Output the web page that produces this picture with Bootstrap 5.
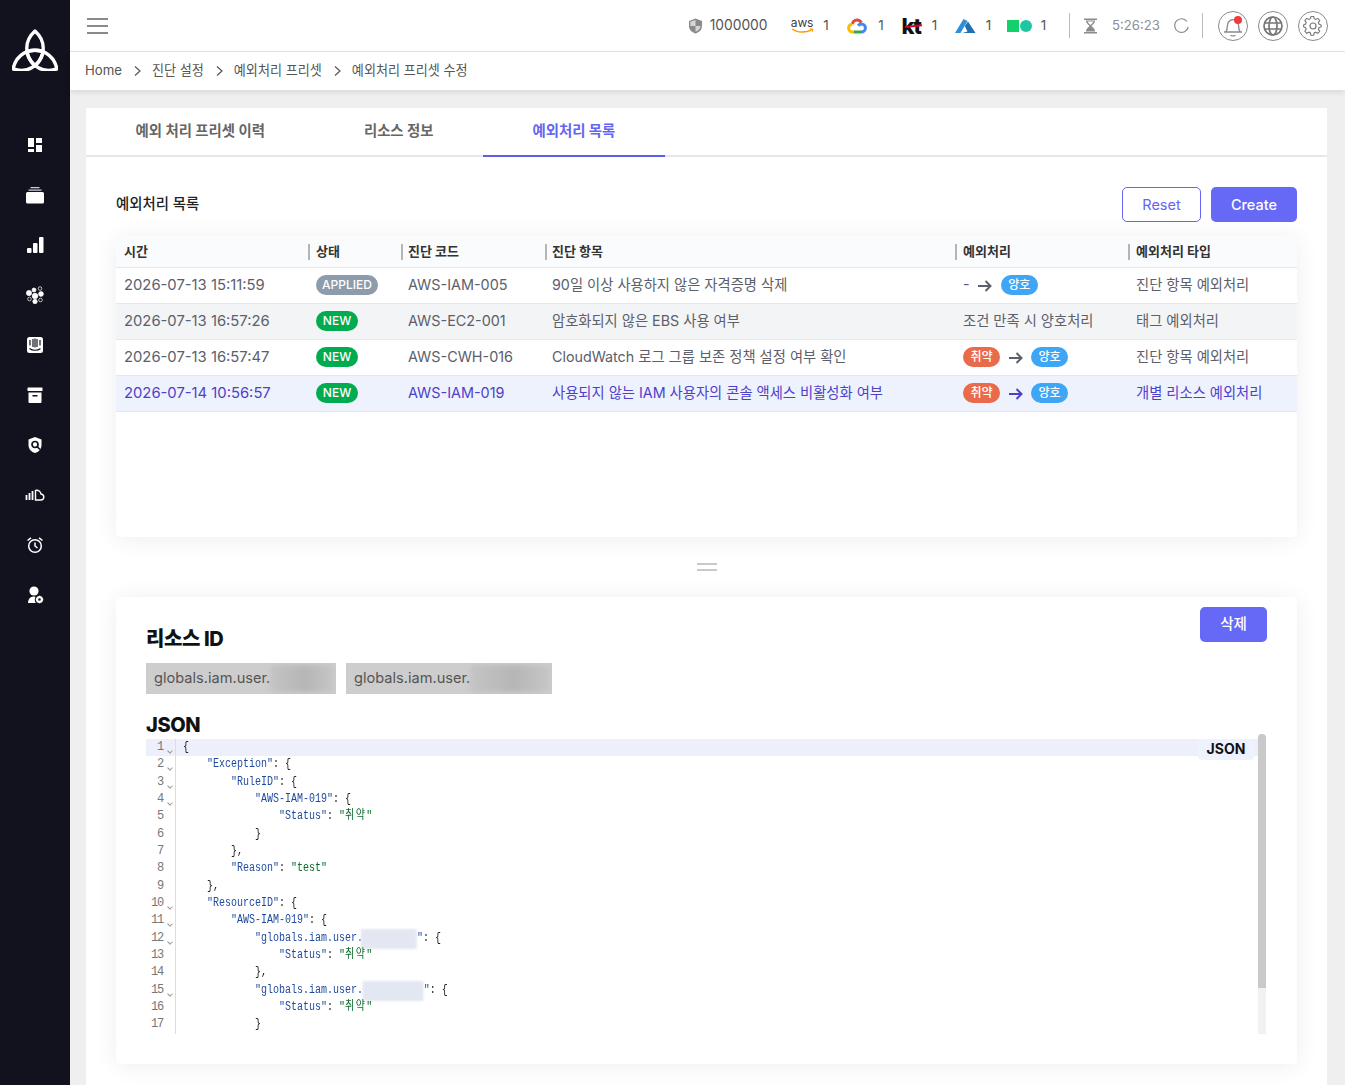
<!DOCTYPE html>
<html lang="ko">
<head>
  <meta charset="UTF-8">
  <title>예외처리 프리셋 수정</title>
  <link href="https://cdn.jsdelivr.net/npm/bootstrap@5.3.3/dist/css/bootstrap.min.css" rel="stylesheet">
  <style>
    html, body { height: 100%; overflow: hidden; }
    body { font-family: Inter, "Noto Sans CJK KR", sans-serif; background: #efefef; color: #555b66; font-size: 14px; }
    .app-shell { height: 1085px; }
    .side-rail { width: 70px; flex: none; background: #12121f; }
    .rail-logo { height: 120px; padding-top: 29px; }
    .rail-item { height: 50px; }
    .main-area { min-width: 0; }
    .top-bar { flex: none; height: 52px; background: #fff; border-bottom: 1px solid #e6e6e6; padding: 0 17px; }
    .burger { width: 21px; }
    .burger i { display: block; height: 2px; background: #8a8a8a; margin: 5px 0; }
    .stat-num { color: #555; font-size: 13.8px; }
    .stat-one { color: #555; font-size: 13.5px; width: 7px; margin-left: 9px; text-align: center; }
    .stat-one.one-8 { margin-left: 8px; }
    .stat-one.one-10 { margin-left: 10px; }
    .stat-one.one-11 { margin-left: 11px; }
    .stat-time { color: #8b8f96; font-size: 13.2px; margin-left: 15px; }
    .v-rule { width: 1px; height: 25px; background: #bbb; }
    .v-rule-a { margin: 0 14px 0 22px; }
    .v-rule-b { margin: 0 15px 0 13px; }
    .ml-7 { margin-left: 7px; }
    .ml-10 { margin-left: 10px; }
    .ml-14 { margin-left: 14px; }
    .ml-15 { margin-left: 15px; }
    .ml-16 { margin-left: 16px; }
    .ml-17 { margin-left: 17px; }
    .ml-23 { margin-left: 23px; }
    .round-btn { width: 30px; height: 30px; border: 1px solid #8a8a8a; border-radius: 50%; position: relative; }
    .red-dot { position: absolute; top: 4px; right: 5px; width: 8px; height: 8px; border-radius: 50%; background: #ef3b3b; }
    .aws-word { font-size: 12px; line-height: 10px; color: #3b3f46; letter-spacing: -.2px; }
    .kt-word { font-size: 22px; line-height: 22px; font-weight: 800; color: #111; letter-spacing: -1px; position: relative; }
    .kt-word i { position: absolute; left: 3px; right: -1px; top: 10px; height: 2px; background: #e2001a; transform: rotate(-6deg); }
    .crumb-bar { flex: none; height: 38px; background: #fff; padding-left: 15px; box-shadow: 0 2px 6px rgba(0, 0, 0, .1); font-size: 13.1px; color: #555; position: relative; }
    .crumb-bar .home-link { font-size: 13.2px; }
    .crumb-sep { margin: 0 11px 0 12px; }
    .content-wrap { padding: 18px 18px 0 16px; min-height: 0; }
    .tab-panel { background: #fff; min-height: 1000px; }
    .tab-strip { border-bottom: 2px solid #e7e7ee; height: 49px; }
    .tab-item { padding: 0 49.5px; height: 49px; line-height: 46px; font-weight: 700; color: #666; font-size: 14.4px; margin-bottom: -2px; }
    .tab-item.is-on { color: #6366f1; border-bottom: 2px solid #5b5fe8; }
    .list-head { padding: 30px 30px 14px; }
    .list-title { font-size: 14.4px; font-weight: 500; color: #222; margin-bottom: 2px; }
    .btn-reset, .btn-violet { height: 35px; font-size: 14.5px; font-weight: 500; border-radius: 5px; padding: 0; }
    .btn-reset { width: 79px; color: #6366f1; border: 1px solid #6366f1; background: #fff; font-weight: 400; }
    .btn-violet { background: #6569f6; color: #fff; border: 0; }
    .btn-create { width: 86px; margin-left: 10px; }
    .btn-del { width: 67px; padding-bottom: 2px; }
    .soft-card { background: #fff; border-radius: 5px; box-shadow: 0 2px 24px rgba(0, 0, 0, .07); margin: 0 30px; }
    .list-card { height: 301px; }
    .rule-table { table-layout: fixed; width: 100%; margin: 0; font-size: 15px; }
    .rule-table th { height: 31px; background: #fafbfd; font-size: 13px; font-weight: 700; color: #333; padding: 0 0 0 7px; border-bottom: 1px solid #e5e7eb; vertical-align: middle; position: relative; }
    .rule-table th + th::before { content: ""; position: absolute; left: -1px; top: 8px; height: 16px; width: 2px; background: #b5b5b5; }
    .rule-table td { height: 36px; padding: 0 0 0 7px; border-bottom: 1px solid #e5e7eb; vertical-align: middle; color: #5b606b; background: #fff; white-space: nowrap; font-size: 14.4px; }
    .rule-table td:first-child { font-size: 14.8px; padding-left: 8px; }
    .rule-table th:first-child { padding-left: 8px; }
    .rule-table th:nth-child(3), .rule-table td:nth-child(3), .rule-table th:nth-child(4), .rule-table td:nth-child(4) { padding-left: 6px; }
    .rule-table td.item-ko { font-size: 14.3px; }
    .rule-table tr.row-grey td { background: #f3f4f6; }
    .rule-table tr.row-pick td { background: #eef2fd; color: #4f3fc9; }
    .flow-arrow { margin: 0 4px 0 5px; }
    .flow-arrow-first { margin: 0 5px 0 4px; }
    .pill { display: inline-block; height: 20px; line-height: 20px; padding: 0; margin-bottom: 2px; text-align: center; border-radius: 10px; color: #fff; font-size: 12px; font-weight: 500; vertical-align: middle; }
    .pill-applied { width: 62px; background: #8d9cab; }
    .pill-new { width: 42px; background: #00ac4f; }
    .pill-bad { width: 37px; background: #ea6b4b; }
    .pill-good { width: 37px; background: #3fa6f5; }
    .grip { height: 60px; }
    .grip i { display: block; width: 20px; height: 2px; background: #c9c9c9; margin: 2px 0; }
    .detail-card { height: 467px; padding: 10px 30px 0; position: relative; }
    .detail-top { height: 46px; }
    .detail-h { font-size: 20px; font-weight: 800; color: #111; margin: 0; line-height: 24px; letter-spacing: -.4px; }
    .head-res { margin-top: -26px; }
    .chip-row { column-gap: 10px; margin: 12px 0 19px; }
    .id-chip { background: #cdcdcd; height: 31px; line-height: 30px; padding-left: 8px; font-size: 14.6px; color: #555; overflow: hidden; white-space: nowrap; }
    .chip-blur { display: inline-block; height: 27px; vertical-align: top; margin-top: 2px; background: linear-gradient(90deg, #c4c4c4, #b6b6b6 55%, #c6c6c6); filter: blur(2px); }
    .code-box { position: relative; height: 300px; margin-top: -3px; }
    .code-body { position: absolute; left: 0; top: 5px; right: 9px; height: 295px; overflow: hidden; font-family: "Liberation Mono", "Noto Sans CJK KR", monospace; font-size: 12px; color: #222; }
    .code-ln { height: 17.33px; line-height: 17.33px; white-space: pre; display: flex; }
    .code-ln.is-cur { background: #edf0fb; }
    .ln-no { flex: none; width: 30px; padding-right: 12px; text-align: right; color: #777; border-right: 1px solid #ddd; position: relative; letter-spacing: -1.2px; }
    .ln-no.can-fold::after { content: ""; position: absolute; right: 3px; top: 10px; width: 4px; height: 4px; border-right: 1px solid #b09a70; border-bottom: 1px solid #7f93b0; transform: rotate(45deg); }
    .ln-txt { display: inline-block; padding-left: 8.4px; transform: scaleX(.833); transform-origin: 0 0; }
    .k { color: #1f4a9c; }
    .s { color: #0b6b2b; }
    .ko-w { letter-spacing: 1.8px; }
    .code-hide { display: inline-block; height: 20px; vertical-align: top; background: #e3e7f2; filter: blur(1px); margin-top: -1px; }
    .mode-tag { position: absolute; top: 5px; right: 13px; width: 56px; height: 21px; line-height: 20px; text-align: center; background: #eef2fd; border-radius: 0 0 4px 4px; font-size: 14px; font-weight: 700; color: #111; }
    .scroll-track { position: absolute; right: 1px; top: 0; width: 8px; height: 300px; background: #f1f1f1; border-radius: 4px 4px 0 0; }
    .scroll-thumb { height: 254px; background: #c9c9c9; border-radius: 4px 4px 0 0; }
  </style>
</head>
<body>
<div class="app-shell d-flex">

  <!-- 사이드바 -->
  <aside class="side-rail d-flex flex-column align-items-center">
    <div class="rail-logo">
      <svg width="46" height="42" viewBox="0 0 46 42" fill="none" stroke="#fff" stroke-width="3.400" stroke-linejoin="round">
        <path d="M23 2C34 12 34 26 23 37 12 26 12 12 23 2z"/>
        <path d="M23 2C34 12 34 26 23 37 12 26 12 12 23 2z" transform="rotate(120 23 27.300)"/>
        <path d="M23 2C34 12 34 26 23 37 12 26 12 12 23 2z" transform="rotate(240 23 27.300)"/>
      </svg>
    </div>
    <div class="rail-item d-flex align-items-center justify-content-center"><svg width="20" height="20" viewBox="0 0 20 20" fill="#fff"><path d="M3 3h6v9H3zM11 3h6v5h-6zM11 10h6v7h-6zM3 14h6v3H3z"/></svg></div>
    <div class="rail-item d-flex align-items-center justify-content-center"><svg width="20" height="20" viewBox="0 0 20 20" fill="#fff"><path d="M1 8.500a1.500 1.500 0 0 1 1.500-1.500h15a1.500 1.500 0 0 1 1.500 1.500V17a1.500 1.500 0 0 1-1.500 1.500h-15A1.500 1.500 0 0 1 1 17z"/><path d="M3.500 4.500h13v1.300h-13zM5.500 2h9v1.200h-9z" opacity=".8"/></svg></div>
    <div class="rail-item d-flex align-items-center justify-content-center"><svg width="20" height="20" viewBox="0 0 20 20" fill="#fff"><rect x="2" y="13" width="4.500" height="5" rx="1"/><rect x="8" y="8" width="4.500" height="10" rx="1"/><rect x="14" y="2" width="4.500" height="16" rx="1"/></svg></div>
    <div class="rail-item d-flex align-items-center justify-content-center"><svg width="20" height="20" viewBox="0 0 20 20" fill="#fff" stroke="#fff" stroke-width=".7"><circle cx="4" cy="8" r="2.600"/><circle cx="9" cy="5" r="2"/><circle cx="15" cy="3.500" r="1.800" fill="none"/><circle cx="16" cy="9" r="2.400"/><circle cx="10" cy="11" r="2.800"/><circle cx="4.500" cy="14" r="1.800" fill="none"/><circle cx="10" cy="16.500" r="2.200"/><circle cx="15.500" cy="15" r="1.800" fill="none"/></svg></div>
    <div class="rail-item d-flex align-items-center justify-content-center"><svg width="20" height="20" viewBox="0 0 20 20"><rect x="2" y="2" width="16" height="16" rx="2.500" fill="#fff"/><path d="M5 5v5.500M8 4v8M10 3.500v9M12 4v8M15 5v5.500" stroke="#12121f" stroke-width="1.200"/><path d="M4.500 13.500c3 2.300 8 2.300 11 0" stroke="#12121f" stroke-width="1.200" fill="none"/></svg></div>
    <div class="rail-item d-flex align-items-center justify-content-center"><svg width="20" height="20" viewBox="0 0 20 20" fill="#fff"><rect x="2.500" y="2.500" width="15" height="3.600" rx=".6"/><path d="M3.500 7.500h13v9.500a1 1 0 0 1-1 1h-11a1 1 0 0 1-1-1z"/><rect x="7.500" y="10" width="5" height="1.500" fill="#12121f"/></svg></div>
    <div class="rail-item d-flex align-items-center justify-content-center"><svg width="20" height="20" viewBox="0 0 20 20"><path d="M10 2l6.500 2.500v5.500c0 4-2.800 7-6.500 8-3.700-1-6.500-4-6.500-8V4.500z" fill="#fff"/><circle cx="10" cy="9.500" r="3" fill="none" stroke="#12121f" stroke-width="1.700"/><path d="M12 11.500l3 3" stroke="#12121f" stroke-width="1.700"/></svg></div>
    <div class="rail-item d-flex align-items-center justify-content-center"><svg width="20" height="20" viewBox="0 0 20 20" fill="none" stroke="#fff" stroke-width="1.400"><path d="M1.500 10v5M4.500 8v7M7.500 6v9" stroke-width="1.800"/><path d="M10.500 5.500c3-.8 5 1 5.500 3.500 1.500.2 2.800 1.500 2.800 3 0 1.700-1.300 3-3 3h-5.300z"/></svg></div>
    <div class="rail-item d-flex align-items-center justify-content-center"><svg width="20" height="20" viewBox="0 0 20 20" fill="none" stroke="#fff" stroke-width="1.500"><circle cx="10" cy="11" r="6.300"/><path d="M10 7.500V11l2.500 2M2.500 5.500L6 2.800M17.500 5.500L14 2.800"/></svg></div>
    <div class="rail-item d-flex align-items-center justify-content-center"><svg width="20" height="20" viewBox="0 0 20 20" fill="#fff"><circle cx="9" cy="6" r="4.600"/><path d="M3 18c.3-4 2.300-6.300 5.500-6.500l2 .3c-1 1.700-1 4.200.3 6.200z"/><circle cx="14.500" cy="14.500" r="2.400" fill="none" stroke="#fff" stroke-width="2.200"/><path d="M14.500 10.800v1.500M14.500 16.700v1.500M10.800 14.500h1.500M16.700 14.500h1.500" stroke="#fff" stroke-width="1.400"/></svg></div>
  </aside>

  <div class="main-area flex-grow-1 d-flex flex-column">
    <!-- 상단바 -->
    <header class="top-bar d-flex align-items-center justify-content-between">
      <div class="burger"><i></i><i></i><i></i></div>
      <div class="d-flex align-items-center">
        <svg width="15" height="16" viewBox="0 0 15 16"><path d="M7.500 .5L14 3v5c0 3.600-2.700 6.300-6.500 7.500C3.700 14.300 1 11.600 1 8V3z" fill="#8a8a8a"/><path d="M7.500 2v6H2.300V3.800zM7.500 8h5.200c-.3 2.600-2.300 4.600-5.200 5.800z" fill="#d5d5d5"/></svg>
        <span class="stat-num ml-7">1000000</span>
        <span class="ml-23 d-inline-flex flex-column align-items-center">
          <span class="aws-word">aws</span>
          <svg width="23" height="6" viewBox="0 0 23 6" fill="none" stroke="#f90" stroke-width="1.500"><path d="M1 1c5 4 15 4 20 .5"/><path d="M19 .8l3 .2-.8 2.800" stroke-width="1"/></svg>
        </span>
        <span class="stat-one">1</span>
        <svg class="ml-17" width="20" height="16" viewBox="0 0 20 16" fill="none" stroke-width="3"><path d="M14.500 4.500C13 2.500 11.500 2 10 2 7.500 2 5.500 4 5.200 6.200" stroke="#ea4335"/><path d="M5.200 6.200C3 6.500 1.600 8.300 1.600 10c0 2.200 1.700 4 4 4h2" stroke="#fbbc04"/><path d="M7 14h7" stroke="#34a853"/><path d="M14 14c2.500 0 4.400-1.800 4.400-4 0-2.300-1.800-4-4-4-1.400 0-2.500.7-3.300 1.700" stroke="#4285f4"/></svg>
        <span class="stat-one one-11">1</span>
        <span class="kt-word ml-17"><span>kt</span><i></i></span>
        <span class="stat-one one-10">1</span>
        <svg class="ml-16" width="22" height="16" viewBox="0 0 22 16"><path d="M9.500 1L1 15h5.500L13.500 3z" fill="#2f8fd6"/><path d="M14 3.500L21.500 15H8.500l5-1.500L10.800 8z" fill="#1f6fb5"/></svg>
        <span class="stat-one">1</span>
        <svg class="ml-15" width="25" height="12" viewBox="0 0 25 12"><rect x="0" y="0" width="12" height="12" fill="#12d06a"/><circle cx="19" cy="6" r="6" fill="#1fc7a0"/></svg>
        <span class="stat-one one-8">1</span>
        <span class="v-rule v-rule-a"></span>
        <svg width="13" height="16" viewBox="0 0 13 16"><path d="M0 .5h13v1.500H0zM0 14h13v1.500H0zM2 2.500h9c0 3-2.500 4-3.500 5.500 1 1.500 3.500 2.500 3.500 5.500H2c0-3 2.500-4 3.500-5.500C4.500 6.500 2 5.500 2 2.500z" fill="#8a8a8a"/><path d="M3.500 3.500h6c-.4 1.400-2 2.400-3 3.600-1-1.200-2.600-2.200-3-3.600z" fill="#fff"/></svg>
        <span class="stat-time">5:26:23</span>
        <svg class="ml-14" width="15" height="16" viewBox="0 0 15 16" fill="none" stroke="#8a8a8a" stroke-width="1.200"><path d="M13 3.500A6.800 6.800 0 1 0 14.200 9"/></svg>
        <span class="v-rule v-rule-b"></span>
        <span class="round-btn d-flex align-items-center justify-content-center">
          <svg width="24" height="24" viewBox="0 0 20 20" fill="none" stroke="#8a8a8a" stroke-width="1.100"><path d="M4 15c1.200-1.500 1.300-3 1.300-5 0-3 2-5.300 4.700-5.300s4.700 2.300 4.700 5.300c0 2 .1 3.500 1.300 5zM2.500 15h15M8 17.500c.5 1 3.500 1 4 0"/></svg>
          <span class="red-dot"></span>
        </span>
        <span class="round-btn d-flex align-items-center justify-content-center ml-10">
          <svg width="22" height="22" viewBox="0 0 22 22" fill="none" stroke="#777" stroke-width="1.700"><circle cx="11" cy="11" r="9"/><ellipse cx="11" cy="11" rx="4" ry="9"/><path d="M2.500 8h17M2.500 14h17"/></svg>
        </span>
        <span class="round-btn d-flex align-items-center justify-content-center ml-10">
          <svg width="20" height="20" viewBox="0 0 20 20" fill="none" stroke="#777" stroke-width="1.200"><circle cx="10" cy="10" r="3"/><path d="M8.500 1.500h3l.5 2.500 1.700.8 2.300-1.200 2 2.300-1.400 2.100.6 1.800 2.300 1v1.800l-2.300 1-.6 1.800 1.400 2.100-2 2.200-2.300-1.200-1.700.8-.5 2.500" transform="translate(0 -1) scale(.93)"/><path d="M8.500 1.500L8 4l-1.700.8L4 3.600 2 5.900l1.400 2.100-.6 1.800-2.300 1v1.800l2.300 1 .6 1.800L2 17.500l2 2.200 2.300-1.200 1.700.8.500 2.500h3" transform="translate(0 -1) scale(.93)"/></svg>
        </span>
      </div>
    </header>

    <!-- 경로 -->
    <nav class="crumb-bar d-flex align-items-center">
      <span class="home-link">Home</span>
      <svg class="crumb-sep" width="7" height="10" viewBox="0 0 7 10" fill="none" stroke="#555" stroke-width="1.200"><path d="M1 .5L6 5 1 9.500"/></svg>
      <span>진단 설정</span>
      <svg class="crumb-sep" width="7" height="10" viewBox="0 0 7 10" fill="none" stroke="#555" stroke-width="1.200"><path d="M1 .5L6 5 1 9.500"/></svg>
      <span>예외처리 프리셋</span>
      <svg class="crumb-sep" width="7" height="10" viewBox="0 0 7 10" fill="none" stroke="#555" stroke-width="1.200"><path d="M1 .5L6 5 1 9.500"/></svg>
      <span>예외처리 프리셋 수정</span>
    </nav>

    <main class="content-wrap flex-grow-1 overflow-hidden">
      <div class="tab-panel">
        <div class="tab-strip d-flex">
          <div class="tab-item">예외 처리 프리셋 이력</div>
          <div class="tab-item">리소스 정보</div>
          <div class="tab-item is-on">예외처리 목록</div>
        </div>

        <div class="list-head d-flex justify-content-between align-items-center">
          <span class="list-title">예외처리 목록</span>
          <div class="d-flex">
            <button class="btn btn-reset">Reset</button>
            <button class="btn btn-violet btn-create">Create</button>
          </div>
        </div>

        <div class="soft-card list-card">
          <table class="rule-table">
            <colgroup><col style="width:193px"><col style="width:93px"><col style="width:144px"><col style="width:410px"><col style="width:173px"><col style="width:168px"></colgroup>
            <thead>
              <tr><th>시간</th><th>상태</th><th>진단 코드</th><th>진단 항목</th><th>예외처리</th><th>예외처리 타입</th></tr>
            </thead>
            <tbody>
              <tr>
                <td>2026-07-13 15:11:59</td>
                <td><span class="pill pill-applied">APPLIED</span></td>
                <td>AWS-IAM-005</td>
                <td class="item-ko">90일 이상 사용하지 않은 자격증명 삭제</td>
                <td>-
                  <svg class="flow-arrow-first" width="14" height="12" viewBox="0 0 14 12" fill="none" stroke="currentColor" stroke-width="2"><path d="M0 6h12.500M7.500 1l5 5-5 5"/></svg>
                  <span class="pill pill-good">양호</span></td>
                <td class="item-ko">진단 항목 예외처리</td>
              </tr>
              <tr class="row-grey">
                <td>2026-07-13 16:57:26</td>
                <td><span class="pill pill-new">NEW</span></td>
                <td>AWS-EC2-001</td>
                <td class="item-ko">암호화되지 않은 EBS 사용 여부</td>
                <td class="item-ko">조건 만족 시 양호처리</td>
                <td class="item-ko">태그 예외처리</td>
              </tr>
              <tr>
                <td>2026-07-13 16:57:47</td>
                <td><span class="pill pill-new">NEW</span></td>
                <td>AWS-CWH-016</td>
                <td class="item-ko">CloudWatch 로그 그룹 보존 정책 설정 여부 확인</td>
                <td><span class="pill pill-bad">취약</span>
                  <svg class="flow-arrow" width="14" height="12" viewBox="0 0 14 12" fill="none" stroke="currentColor" stroke-width="2"><path d="M0 6h12.500M7.500 1l5 5-5 5"/></svg>
                  <span class="pill pill-good">양호</span></td>
                <td class="item-ko">진단 항목 예외처리</td>
              </tr>
              <tr class="row-pick">
                <td>2026-07-14 10:56:57</td>
                <td><span class="pill pill-new">NEW</span></td>
                <td>AWS-IAM-019</td>
                <td class="item-ko">사용되지 않는 IAM 사용자의 콘솔 액세스 비활성화 여부</td>
                <td><span class="pill pill-bad">취약</span>
                  <svg class="flow-arrow" width="14" height="12" viewBox="0 0 14 12" fill="none" stroke="currentColor" stroke-width="2"><path d="M0 6h12.500M7.500 1l5 5-5 5"/></svg>
                  <span class="pill pill-good">양호</span></td>
                <td class="item-ko">개별 리소스 예외처리</td>
              </tr>
            </tbody>
          </table>
        </div>

        <div class="grip d-flex flex-column align-items-center justify-content-center"><i></i><i></i></div>

        <div class="soft-card detail-card">
          <div class="detail-top d-flex justify-content-end">
            <button class="btn btn-violet btn-del">삭제</button>
          </div>
          <h5 class="detail-h head-res">리소스 ID</h5>
          <div class="d-flex chip-row">
            <div class="id-chip" style="width:190px">globals.iam.user.<span class="chip-blur" style="width:64px"></span></div>
            <div class="id-chip" style="width:206px">globals.iam.user.<span class="chip-blur" style="width:80px"></span></div>
          </div>
          <h5 class="detail-h">JSON</h5>
          <div class="code-box">
            <div class="code-body">
              <div class="code-ln is-cur"><span class="ln-no can-fold">1</span><span class="ln-txt">{</span></div>
              <div class="code-ln"><span class="ln-no can-fold">2</span><span class="ln-txt">    <span class="k">"Exception"</span>: {</span></div>
              <div class="code-ln"><span class="ln-no can-fold">3</span><span class="ln-txt">        <span class="k">"RuleID"</span>: {</span></div>
              <div class="code-ln"><span class="ln-no can-fold">4</span><span class="ln-txt">            <span class="k">"AWS-IAM-019"</span>: {</span></div>
              <div class="code-ln"><span class="ln-no">5</span><span class="ln-txt">                <span class="k">"Status"</span>: <span class="s">"<span class="ko-w">취약</span>"</span></span></div>
              <div class="code-ln"><span class="ln-no">6</span><span class="ln-txt">            }</span></div>
              <div class="code-ln"><span class="ln-no">7</span><span class="ln-txt">        },</span></div>
              <div class="code-ln"><span class="ln-no">8</span><span class="ln-txt">        <span class="k">"Reason"</span>: <span class="s">"test"</span></span></div>
              <div class="code-ln"><span class="ln-no">9</span><span class="ln-txt">    },</span></div>
              <div class="code-ln"><span class="ln-no can-fold">10</span><span class="ln-txt">    <span class="k">"ResourceID"</span>: {</span></div>
              <div class="code-ln"><span class="ln-no can-fold">11</span><span class="ln-txt">        <span class="k">"AWS-IAM-019"</span>: {</span></div>
              <div class="code-ln"><span class="ln-no can-fold">12</span><span class="ln-txt">            <span class="k">"globals.iam.user.<span class="code-hide" style="width:67px;margin-left:-2px"></span>"</span>: {</span></div>
              <div class="code-ln"><span class="ln-no">13</span><span class="ln-txt">                <span class="k">"Status"</span>: <span class="s">"<span class="ko-w">취약</span>"</span></span></div>
              <div class="code-ln"><span class="ln-no">14</span><span class="ln-txt">            },</span></div>
              <div class="code-ln"><span class="ln-no can-fold">15</span><span class="ln-txt">            <span class="k">"globals.iam.user.<span class="code-hide" style="width:73px"></span>"</span>: {</span></div>
              <div class="code-ln"><span class="ln-no">16</span><span class="ln-txt">                <span class="k">"Status"</span>: <span class="s">"<span class="ko-w">취약</span>"</span></span></div>
              <div class="code-ln"><span class="ln-no">17</span><span class="ln-txt">            }</span></div>
            </div>
            <div class="mode-tag">JSON</div>
            <div class="scroll-track"><div class="scroll-thumb"></div></div>
          </div>
        </div>
      </div>
    </main>
  </div>
</div>
<script src="https://cdn.jsdelivr.net/npm/bootstrap@5.3.3/dist/js/bootstrap.bundle.min.js"></script>
</body>
</html>
